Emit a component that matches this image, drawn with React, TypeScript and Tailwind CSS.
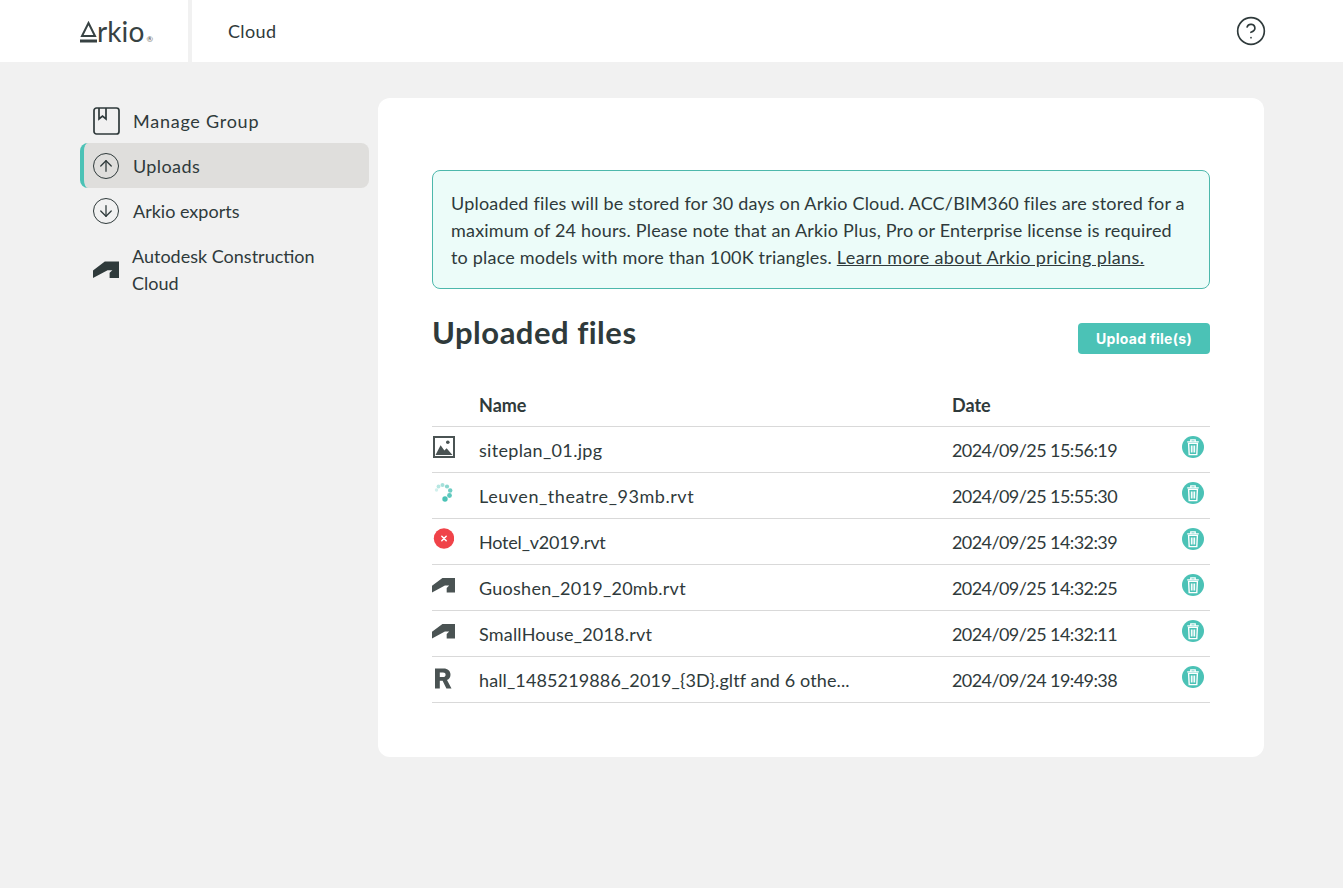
import { ArrowDown, ArrowUp, CircleHelp } from "lucide-react";

const font = "font-['Lato','Noto_Sans',sans-serif]";

function AcsIcon({ className }: { className: string }) {
  return (
    <svg viewBox="0 0 26 17" className={className} fill="currentColor">
      <path d="M0 17V9.4L11.8 .6H26V17H16.6V11.8L19.4 9.2H14.6Z" />
    </svg>
  );
}

function RevitIcon() {
  return (
    <svg viewBox="0 0 18 20" className="ml-[2px] mt-[2px] h-[21px] w-[18px] text-[#4a5353]" fill="currentColor">
      <path fillRule="evenodd" d="M1 0H9.5C13.8 0 16.5 2.4 16.5 6.2C16.5 8.8 15.2 10.6 13 11.5L17.5 20H12.4L8.6 12.3H5.8V20H1ZM5.8 4V8.6H9C10.7 8.6 11.6 7.7 11.6 6.3C11.6 4.9 10.7 4 9 4Z" />
    </svg>
  );
}

function ImageIcon() {
  return (
    <svg viewBox="0 0 22 22" className="ml-[1px] h-[22px] w-[22px] text-[#4a5353]">
      <rect x="1" y="1" width="20" height="20" fill="none" stroke="currentColor" strokeWidth="2" />
      <circle cx="14.8" cy="6.2" r="1.8" fill="currentColor" />
      <path d="M2.5 19L7.6 9.2L11.4 14.6L13.6 12.2L19.5 19Z" fill="currentColor" />
    </svg>
  );
}

function Spinner() {
  const dots = [
    [13, 17, 2.7, 1],
    [17.5, 13.5, 2.4, 0.9],
    [18.2, 8.5, 2.2, 0.8],
    [15, 4.5, 2.1, 0.65],
    [10.5, 3, 2, 0.5],
    [6.5, 4.5, 1.9, 0.4],
    [4.5, 8, 1.7, 0.25],
  ];
  return (
    <svg viewBox="0 0 22 22" className="h-[22px] w-[22px]">
      {dots.map(([cx, cy, r, o]) => (
        <circle key={`${cx}-${cy}`} cx={cx} cy={cy} r={r} fill="#4bc2b6" opacity={o} />
      ))}
    </svg>
  );
}

function ErrorIcon() {
  return (
    <svg viewBox="0 0 22 22" className="h-[22px] w-[22px]">
      <circle cx="12" cy="10.5" r="10.2" fill="#f04349" />
      <path d="M9.8 8.3L14.2 12.7M14.2 8.3L9.8 12.7" stroke="#fff" strokeWidth="1.5" strokeLinecap="round" />
    </svg>
  );
}

function TrashButton() {
  return (
    <svg viewBox="0 0 22 22" className="h-[22px] w-[22px]">
      <circle cx="11" cy="11" r="11" fill="#4bc2b6" />
      <path d="M5.2 5.8H16.8M8.8 5.6V3.9H13.2V5.6" fill="none" stroke="#fff" strokeWidth="1.3" />
      <path d="M6.6 7.4H15.4L14.8 18.6H7.2Z" fill="none" stroke="#fff" strokeWidth="1.4" />
      <path d="M9.4 9.6V16.6M11 9.6V16.6M12.6 9.6V16.6" stroke="#fff" strokeWidth="1.1" />
    </svg>
  );
}

const files = [
  { name: "siteplan_01.jpg", track: "tracking-[0.33px]", date: "2024/09/25 15:56:19", icon: <ImageIcon /> },
  { name: "Leuven_theatre_93mb.rvt", track: "tracking-[0.55px]", date: "2024/09/25 15:55:30", icon: <Spinner /> },
  { name: "Hotel_v2019.rvt", track: "tracking-[-0.2px]", date: "2024/09/25 14:32:39", icon: <ErrorIcon /> },
  { name: "Guoshen_2019_20mb.rvt", track: "tracking-[0.27px]", date: "2024/09/25 14:32:25", icon: <AcsIcon className="h-[16px] w-[23px] text-[#4a5353]" /> },
  { name: "SmallHouse_2018.rvt", track: "tracking-[0.2px]", date: "2024/09/25 14:32:11", icon: <AcsIcon className="h-[16px] w-[23px] text-[#4a5353]" /> },
  { name: "hall_1485219886_2019_{3D}.gltf and 6 othe...", track: "tracking-[0.12px]", date: "2024/09/24 19:49:38", icon: <RevitIcon /> },
];

export default function App() {
  return (
    <div className={`min-h-[888px] bg-[#f1f1f1] text-[#2f3a3b] ${font}`}>
      {/* Top bar */}
      <header className="flex h-[62px] items-stretch bg-white pl-[80px] pr-[78px]">
        <div className="flex w-[108px] items-center pb-[1px]">
          <svg viewBox="0 0 17 24" className="mt-[5px] h-[24px] w-[17px] text-[#374243]" fill="none" stroke="currentColor">
            <path d="M8.5 2L15 15H2Z" strokeWidth="2" />
            <path d="M0 20H17" strokeWidth="3" />
          </svg>
          <span className="text-[28px] leading-none tracking-[0.1px] text-[#374243]">rkio</span>
          <span className="ml-[2px] mt-[16px] text-[8px] leading-none text-[#555]">®</span>
        </div>
        <div className="w-[4px] bg-[#f1f1f1]" />
        <div className="flex flex-1 items-center pl-[36px] text-[18px] tracking-[0.35px]">Cloud</div>
        <div className="flex items-center">
          <CircleHelp className="-mx-[2px] h-[32px] w-[32px]" strokeWidth={1.25} />
        </div>
      </header>

      <div className="flex items-start pl-[80px] pt-[36px]">
        {/* Sidebar */}
        <nav className="w-[289px] text-[18px]">
          <a className="flex h-[45px] items-center gap-[13px] pl-[13px]">
            <svg viewBox="0 0 27 28" className="h-[28px] w-[27px] shrink-0" fill="none" stroke="currentColor" strokeWidth="1.7">
              <rect x="1" y="1" width="25" height="26" rx="2.5" />
              <path d="M6 1V12L9.5 9L13 12V1" />
            </svg>
            <span className="pt-[2px] tracking-[0.75px]">Manage Group</span>
          </a>
          <a className="flex h-[45px] items-center gap-[14px] rounded-[8px] border-l-[4px] border-[#4bc2b6] bg-[#dfdedc] pl-[9px]">
            <span className="flex h-[26px] w-[26px] items-center justify-center rounded-full border-[1.75px] border-current">
              <ArrowUp className="h-[18px] w-[18px]" strokeWidth={1.7} />
            </span>
            <span className="pt-[2px] tracking-[0.4px]">Uploads</span>
          </a>
          <a className="flex h-[45px] items-center gap-[14px] pl-[13px]">
            <span className="flex h-[26px] w-[26px] items-center justify-center rounded-full border-[1.75px] border-current">
              <ArrowDown className="h-[18px] w-[18px]" strokeWidth={1.7} />
            </span>
            <span className="pt-[2px]">Arkio exports</span>
          </a>
          <a className="flex items-center gap-[13px] py-[9px] pl-[13px] leading-[27px]">
            <AcsIcon className="h-[17px] w-[26px] shrink-0" />
            <span className="w-[190px] pt-[1px]">Autodesk Construction Cloud</span>
          </a>
        </nav>

        {/* Card */}
        <main className="ml-[9px] h-[659px] w-[886px] rounded-[12px] bg-white px-[54px] pt-[72px]">
          <div className="h-[119px] rounded-[8px] border border-[#4db8ac] bg-[#ecfcf9] px-[18px] py-[19px] text-[18px] leading-[27px] tracking-[0.19px]">
            Uploaded files will be stored for 30 days on Arkio Cloud. ACC/BIM360 files are stored for a maximum of 24 hours. Please note that an Arkio Plus, Pro or Enterprise license is required to place models with more than 100K triangles.{" "}
            <a className="tracking-[0.38px] underline">Learn more about Arkio pricing plans.</a>
          </div>

          <div className="mt-[23px] flex items-start justify-between">
            <h1 className="text-[31px] font-bold leading-[40px] tracking-[0.5px]">Uploaded files</h1>
            <button className="mt-[11px] h-[31px] w-[132px] rounded-[4px] bg-[#4bc2b6] font-['Inter',sans-serif] text-[14px] font-bold tracking-[0.3px] text-white">
              Upload file(s)
            </button>
          </div>

          <div className="mt-[29px] grid h-[44px] grid-cols-[47px_473px_1fr] items-center border-b border-[#d9d9d9] pt-[2px] text-[18px] font-bold">
            <span />
            <span>Name</span>
            <span>Date</span>
          </div>
          {files.map((f) => (
            <div key={f.name} className="grid h-[46px] grid-cols-[47px_473px_1fr_22px] border-b border-[#d9d9d9] pr-[6px] text-[18px]">
              <span className="mt-[9px] flex h-[22px] items-center">{f.icon}</span>
              <span className={`self-center whitespace-nowrap pt-[2px] ${f.track}`}>{f.name}</span>
              <span className="self-center whitespace-nowrap pt-[2px] tracking-[-0.58px]">{f.date}</span>
              <span className="mt-[9px]"><TrashButton /></span>
            </div>
          ))}
        </main>
      </div>
    </div>
  );
}
